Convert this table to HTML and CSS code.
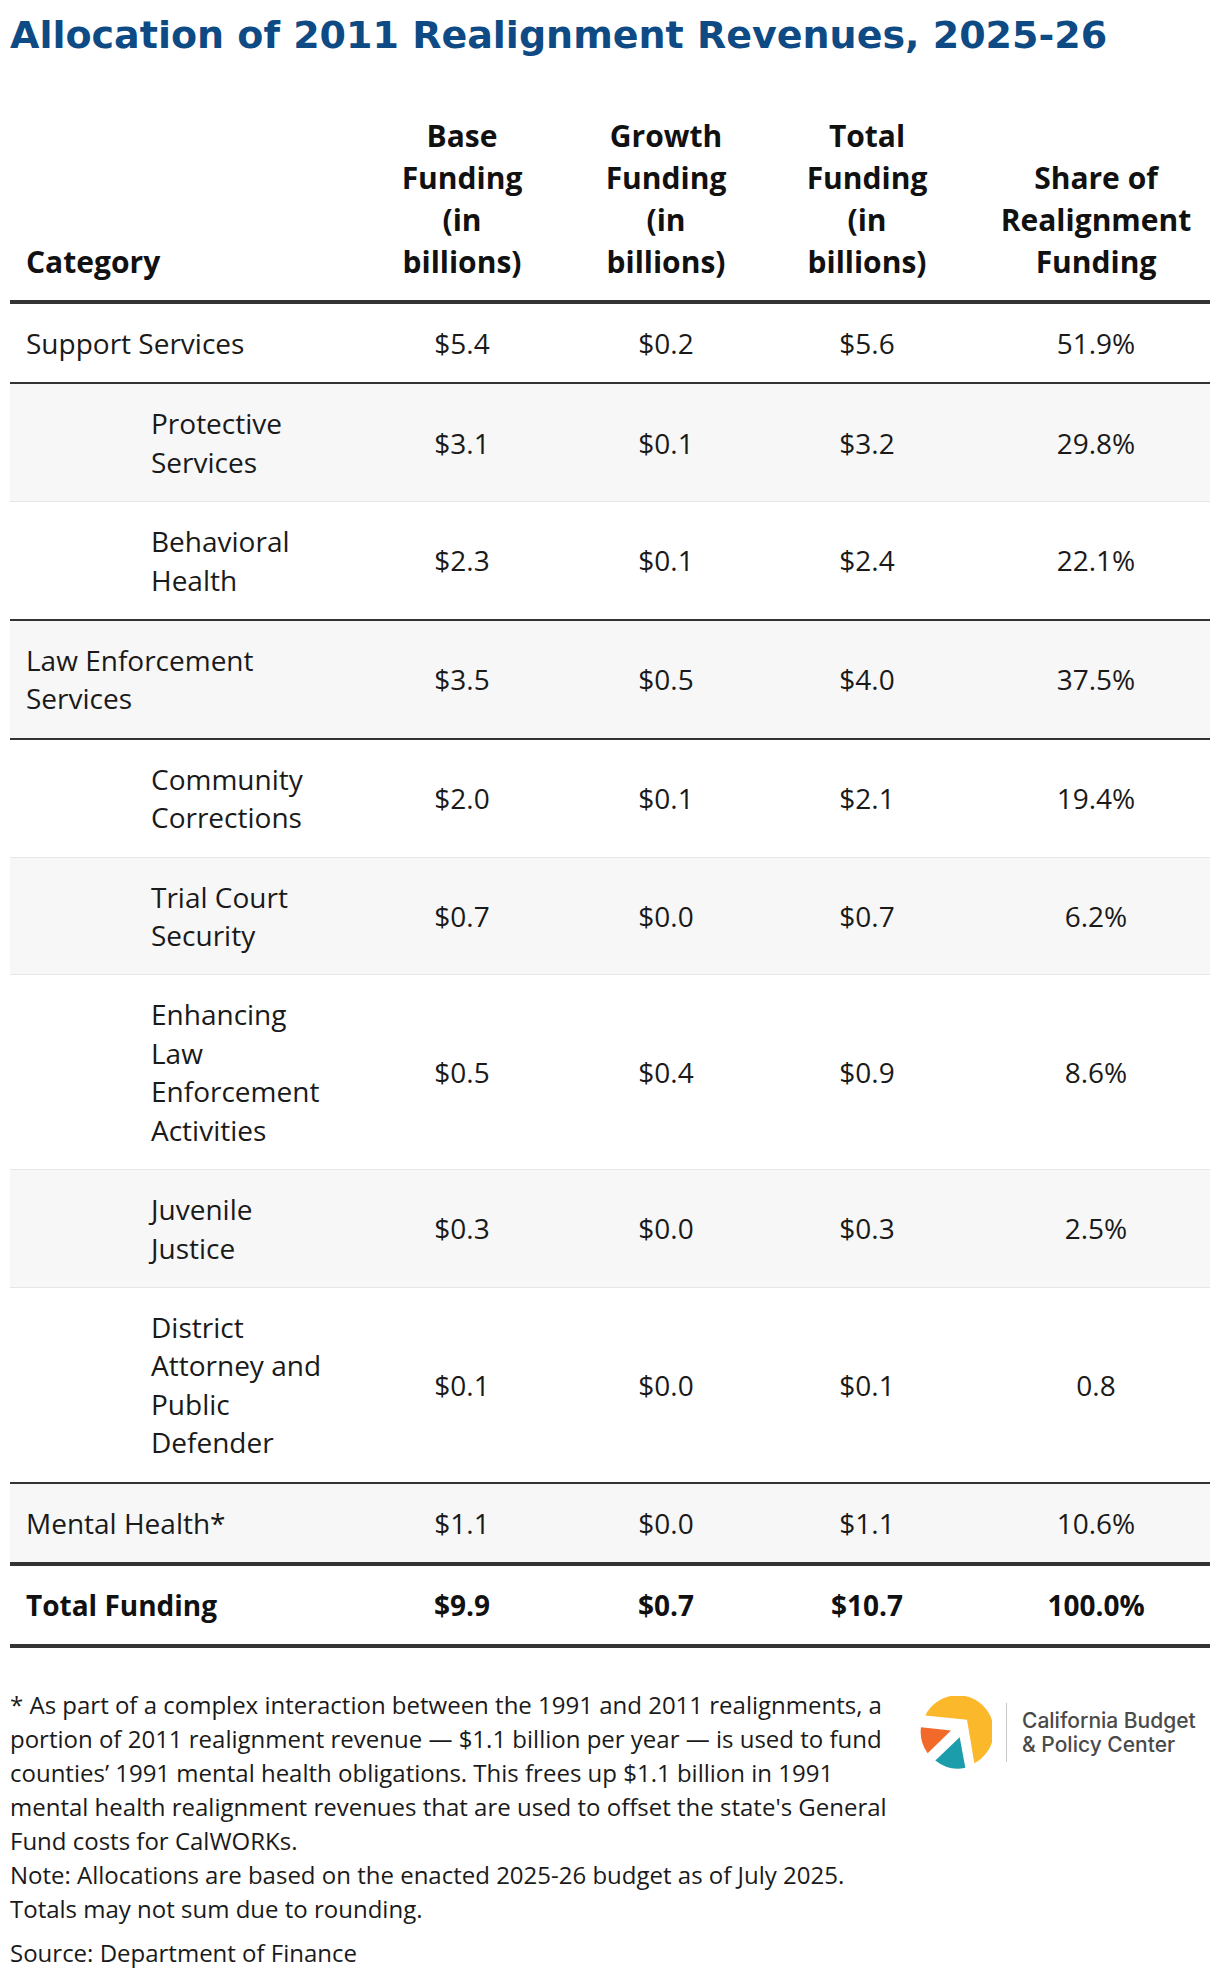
FILE: index.html
```html
<!DOCTYPE html>
<html lang="en">
<head>
<meta charset="utf-8">
<title>Allocation of 2011 Realignment Revenues, 2025-26</title>
<link rel="stylesheet" href="styles.css">
</head>
<body>
<main class="page">
  <h1 class="title">Allocation of 2011 Realignment Revenues, 2025-26</h1>

  <table class="data">
    <colgroup>
      <col class="c-cat">
      <col class="c-base">
      <col class="c-growth">
      <col class="c-total">
      <col class="c-share">
    </colgroup>
    <thead>
      <tr>
        <th class="cat">Category</th>
        <th>Base<br>Funding<br>(in<br>billions)</th>
        <th>Growth<br>Funding<br>(in<br>billions)</th>
        <th>Total<br>Funding<br>(in<br>billions)</th>
        <th>Share of<br>Realignment<br>Funding</th>
      </tr>
    </thead>
    <tbody>
      <tr class="group-end">
        <td class="cat">Support Services</td><td>$5.4</td><td>$0.2</td><td>$5.6</td><td>51.9%</td>
      </tr>
      <tr>
        <td class="cat sub">Protective Services</td><td>$3.1</td><td>$0.1</td><td>$3.2</td><td>29.8%</td>
      </tr>
      <tr class="group-end">
        <td class="cat sub">Behavioral Health</td><td>$2.3</td><td>$0.1</td><td>$2.4</td><td>22.1%</td>
      </tr>
      <tr class="group-end">
        <td class="cat">Law Enforcement Services</td><td>$3.5</td><td>$0.5</td><td>$4.0</td><td>37.5%</td>
      </tr>
      <tr>
        <td class="cat sub">Community Corrections</td><td>$2.0</td><td>$0.1</td><td>$2.1</td><td>19.4%</td>
      </tr>
      <tr>
        <td class="cat sub">Trial Court Security</td><td>$0.7</td><td>$0.0</td><td>$0.7</td><td>6.2%</td>
      </tr>
      <tr>
        <td class="cat sub">Enhancing Law Enforcement Activities</td><td>$0.5</td><td>$0.4</td><td>$0.9</td><td>8.6%</td>
      </tr>
      <tr>
        <td class="cat sub">Juvenile Justice</td><td>$0.3</td><td>$0.0</td><td>$0.3</td><td>2.5%</td>
      </tr>
      <tr class="group-end">
        <td class="cat sub">District Attorney and Public Defender</td><td>$0.1</td><td>$0.0</td><td>$0.1</td><td>0.8</td>
      </tr>
      <tr class="before-total">
        <td class="cat">Mental Health*</td><td>$1.1</td><td>$0.0</td><td>$1.1</td><td>10.6%</td>
      </tr>
      <tr class="total">
        <td class="cat">Total Funding</td><td>$9.9</td><td>$0.7</td><td>$10.7</td><td>100.0%</td>
      </tr>
    </tbody>
  </table>

  <footer class="foot">
    <div class="notes">
      <p class="note">* As part of a complex interaction between the 1991 and 2011 realignments, a portion of 2011 realignment revenue — $1.1 billion per year — is used to fund counties’ 1991 mental health obligations. This frees up $1.1 billion in 1991 mental health realignment revenues that are used to offset the state's General Fund costs for CalWORKs.<br>Note: Allocations are based on the enacted 2025-26 budget as of July 2025. Totals may not sum due to rounding.</p>
      <p class="source">Source: Department of Finance</p>
    </div>
    <div class="logo">
      <svg class="logo-mark" viewBox="59 47 216 218" width="72" height="73" aria-hidden="true">
        <path d="M75 105 A108 108 0 1 1 222 248 L200 118 Z" fill="#fbb82b"/>
        <path d="M62 140 L152 150 L82 218 A108 108 0 0 1 62 140 Z" fill="#f26a29"/>
        <path d="M105 240 L178 170 L195 262 A108 108 0 0 1 105 240 Z" fill="#1c9dab"/>
      </svg>
      <span class="logo-rule"></span>
      <span class="logo-text">California Budget<br>&amp; Policy Center</span>
    </div>
  </footer>
</main>
</body>
</html>
```
FILE: styles.css
```css
html, body {
  margin: 0;
  padding: 0;
  background: #ffffff;
}

body {
  font-family: "Open Sans", "Liberation Sans", sans-serif;
  color: #1a1a1a;
}

.page {
  padding: 0 10px;
}

.title {
  margin: 0;
  padding-top: 10px;
  font-family: "DejaVu Sans", Inter, sans-serif;
  font-weight: 700;
  font-size: 38px;
  line-height: 50px;
  color: #0e4a83;
  letter-spacing: 0;
}

.data {
  width: 1200px;
  table-layout: fixed;
  border-collapse: collapse;
  margin-top: 39px;
  font-size: 28px;
}

.c-cat { width: 334px; }
.c-base { width: 236px; }
.c-growth { width: 172px; }
.c-total { width: 230px; }
.c-share { width: 228px; }

.data th {
  font-weight: 700;
  font-size: 30px;
  line-height: 42px;
  padding: 16px 6px 17px;
  text-align: center;
  vertical-align: bottom;
  color: #111;
  border-bottom: 4px solid #333333;
}

.data th.cat {
  text-align: left;
  padding-left: 16px;
}

.data td {
  line-height: 38.4px;
  padding: 20px 16px;
  text-align: center;
  vertical-align: middle;
  border-bottom: 1px solid #e6e6e6;
}

.data td.cat {
  text-align: left;
}

.data td.sub {
  padding-left: 141px;
}

.data tbody tr:nth-child(even) td {
  background: #f7f7f7;
}

.data tr.group-end td {
  border-bottom: 2px solid #333333;
}

.data tr.before-total td {
  border-bottom: 4px solid #333333;
}

.data tr.total td {
  font-weight: 700;
  color: #111;
  border-bottom: 4px solid #333333;
}

.foot {
  display: flex;
  align-items: flex-start;
  margin-top: 40px;
}

.notes {
  width: 890px;
  font-size: 24px;
  line-height: 34px;
}

.notes p {
  margin: 0;
}

.notes .source {
  margin-top: 10px;
}

.logo {
  display: flex;
  align-items: center;
  margin-left: 20px;
  margin-top: 8px;
}

.logo-mark {
  display: block;
}

.logo-rule {
  display: block;
  width: 1px;
  height: 59px;
  background: #c8c8c8;
  margin: 0 15px 0 14px;
}

.logo-text {
  font-family: Inter, "Open Sans", sans-serif;
  font-weight: 500;
  font-size: 21px;
  line-height: 24px;
  color: #4a4a4a;
}
```
